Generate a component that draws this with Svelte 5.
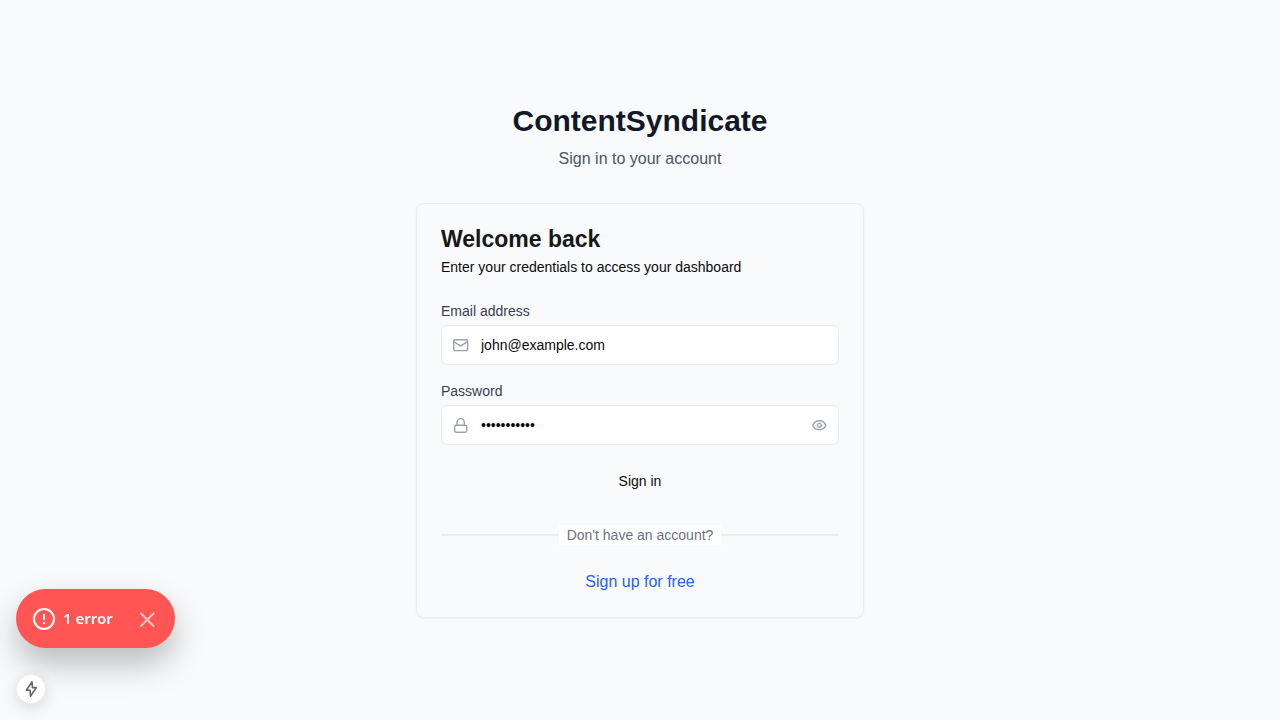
<script>
  let email = $state('john@example.com');
  let password = $state('password123');
  let visible = $state(false);
  let errorOpen = $state(true);
</script>

<main>
  <div class="wrap">
    <header class="brand">
      <h1>ContentSyndicate</h1>
      <p>Sign in to your account</p>
    </header>

    <section class="card">
      <h2>Welcome back</h2>
      <p class="desc">Enter your credentials to access your dashboard</p>

      <form onsubmit={(e) => e.preventDefault()}>
        <div class="group">
          <label for="email">Email address</label>
          <div class="field">
            <svg class="icon" viewBox="0 0 16 16" aria-hidden="true">
              <rect x="0.7" y="2.7" width="13.9" height="10.9" rx="1.4" />
              <path d="M0.9 4.6l6 4a1.4 1.4 0 0 0 1.5 0l6-4" />
            </svg>
            <input id="email" type="email" bind:value={email} />
          </div>
        </div>
        <div class="group">
          <label for="password">Password</label>
          <div class="field">
            <svg class="icon" viewBox="0 0 16 16" aria-hidden="true">
              <rect x="1.7" y="8.2" width="12" height="7" rx="1.4" />
              <path d="M4 8.2V5.3a3.65 3.65 0 0 1 7.3 0v2.9" />
            </svg>
            <input id="password" type={visible ? 'text' : 'password'} value={password} oninput={(e) => (password = e.currentTarget.value)} />
            <button class="eye" type="button" aria-label="Show password" onclick={() => (visible = !visible)}>
              <svg class="icon" viewBox="0 0 16 16" aria-hidden="true">
                <path d="M1.7 8.3C3 5.2 5.5 3.8 8.3 3.8s5.3 1.4 6.6 4.5c-1.3 3.1-3.8 4.5-6.6 4.5S3 11.4 1.7 8.3z" />
                <circle cx="8.3" cy="8.3" r="1.9" />
              </svg>
            </button>
          </div>
        </div>
        <button class="submit" type="submit">Sign in</button>
      </form>

      <div class="divider"><span>Don't have an account?</span></div>
      <a class="signup" href="#signup">Sign up for free</a>
    </section>
  </div>
</main>

<aside class="dev">
  {#if errorOpen}
    <div class="toast" role="alert">
      <svg class="alert" viewBox="0 0 22 22" aria-hidden="true">
        <circle cx="11" cy="11" r="10" />
        <path d="M11 6v6M11 14v2" />
      </svg>
      <span>1 error</span>
      <button class="close" type="button" aria-label="Dismiss error" onclick={() => (errorOpen = false)}>
        <svg viewBox="0 0 16 16" aria-hidden="true"><path d="M2 2.5l12.5 12.5M14.5 2.5L2 15" /></svg>
      </button>
    </div>
  {/if}
  <div class="bolt">
    <svg viewBox="0 0 16 20" aria-hidden="true">
      <path d="M9 2.8 3.4 11.3h3.7l.4 6 5.8-8.7H9.4z" />
    </svg>
  </div>
</aside>

<style>
  :global(body) {
    background: #f9fafb;
    font-family: 'Liberation Sans', Arial, sans-serif;
    color: #0a0a0a;
  }
  :global(*) {
    box-sizing: border-box;
  }
  main {
    min-height: 100vh;
    display: flex;
    align-items: center;
    justify-content: center;
    padding: 49px 16px 48px;
    background: #f9fafc;
  }
  .wrap {
    width: 100%;
    max-width: 448px;
    display: flex;
    flex-direction: column;
    gap: 32px;
  }
  h1, h2, p {
    margin: 0;
  }
  .brand {
    display: flex;
    flex-direction: column;
    gap: 8px;
    text-align: center;
  }
  h1 {
    font-size: 30px;
    line-height: 36px;
    color: #111827;
  }
  .brand p {
    font-size: 16px;
    line-height: 24px;
    color: #4b5563;
  }
  .card {
    padding: 23px 24px;
    border: 1px solid #ebecef;
    border-radius: 8px;
    box-shadow: 0 1px 2px rgba(0, 0, 0, 0.05);
  }
  h2 {
    font-size: 23px;
    line-height: 24px;
    color: #171717;
  }
  .desc {
    margin-top: 6px;
    font-size: 14px;
    line-height: 20px;
  }
  form {
    margin-top: 24px;
    display: flex;
    flex-direction: column;
    gap: 16px;
  }
  .group {
    display: flex;
    flex-direction: column;
    gap: 4px;
  }
  label {
    font-size: 14px;
    line-height: 20px;
    color: #374151;
  }
  .field {
    display: flex;
    align-items: center;
    gap: 12px;
    height: 40px;
    padding: 0 11px;
    border: 1px solid #ebecef;
    border-radius: 6px;
    background: #fff;
  }
  .icon {
    display: block;
    flex: none;
    width: 16px;
    height: 16px;
    fill: none;
    stroke: #9ca3af;
    stroke-width: 1.4;
    stroke-linecap: round;
    stroke-linejoin: round;
  }
  input {
    flex: 1;
    min-width: 0;
    padding: 0;
    border: 0;
    outline: 0;
    background: transparent;
    color: inherit;
    font: 14px/20px 'Liberation Sans', Arial, sans-serif;
  }
  button {
    padding: 0;
    border: 0;
    background: none;
    color: inherit;
    cursor: pointer;
  }
  .submit {
    height: 40px;
    font: 14px/20px 'Liberation Sans', Arial, sans-serif;
  }
  .divider {
    margin-top: 24px;
    display: flex;
    align-items: center;
    font-size: 14px;
    line-height: 20px;
    color: #6b7280;
  }
  .divider::before,
  .divider::after {
    content: '';
    flex: 1;
    height: 2px;
    background: #ebecef;
  }
  .divider span {
    padding: 0 8px;
    background: #fff;
  }
  .signup {
    display: block;
    width: fit-content;
    margin: 25px auto 0;
    font-size: 16px;
    line-height: 24px;
    color: #2563eb;
    text-decoration: none;
  }
  .dev {
    position: fixed;
    left: 16px;
    bottom: 16px;
    display: flex;
    flex-direction: column;
    align-items: flex-start;
    gap: 26px;
  }
  .toast {
    display: flex;
    align-items: center;
    padding: 18px 20px 18px 17px;
    border-radius: 30px;
    background: #ff5555;
    color: #fff;
    font: 600 15px/23px 'Noto Sans', 'Open Sans', sans-serif;
    box-shadow: 0 16px 32px rgba(0, 0, 0, 0.25);
  }
  .alert {
    width: 22px;
    height: 22px;
    margin-right: 8px;
    fill: none;
    stroke: #fff;
    stroke-width: 2;
  }
  .close {
    display: flex;
    margin-left: 26px;
  }
  .close svg {
    width: 16px;
    height: 16px;
    fill: none;
    stroke: #ffc4c4;
    stroke-width: 2;
    stroke-linecap: round;
  }
  .bolt {
    display: flex;
    align-items: center;
    justify-content: center;
    width: 30px;
    height: 30px;
    border: 1px solid #ececec;
    border-radius: 50%;
    background: #fff;
    box-shadow: 0 4px 16px rgba(0, 0, 0, 0.15);
  }
  .bolt svg {
    width: 16px;
    height: 20px;
    fill: none;
    stroke: #666;
    stroke-width: 1.6;
    stroke-linejoin: round;
  }
</style>
